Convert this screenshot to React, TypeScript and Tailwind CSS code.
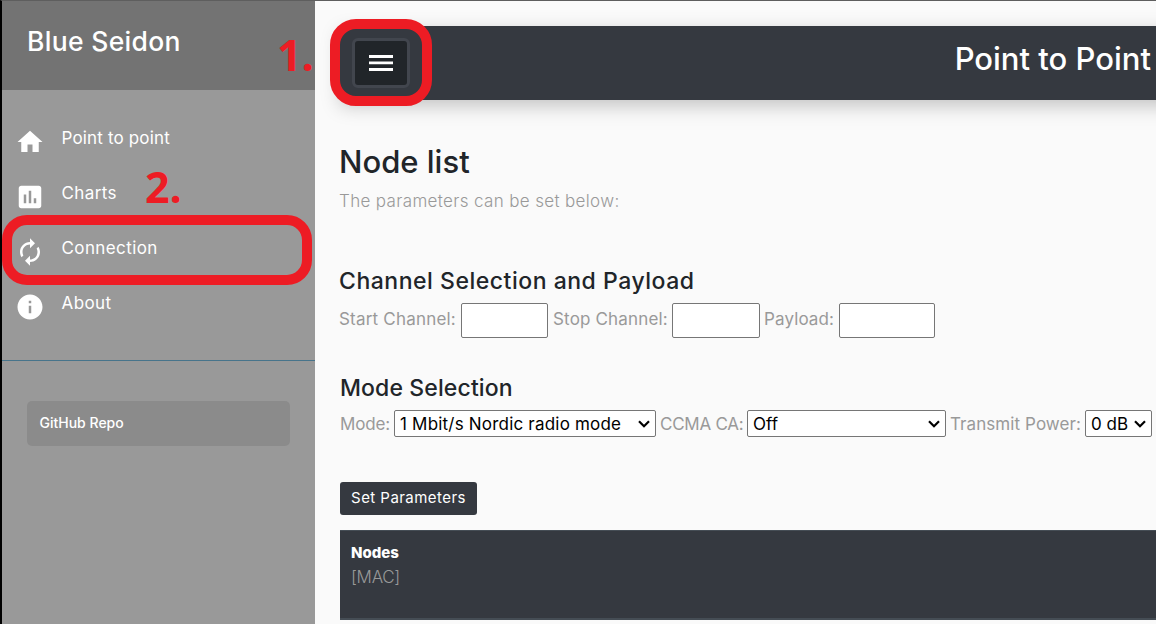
import type { ReactNode } from "react";
import { MdAssessment, MdAutorenew, MdHome, MdInfo } from "react-icons/md";

function NavItem({ icon, children }: { icon: ReactNode; children: ReactNode }) {
  return (
    <a className="flex h-[55px] items-start gap-[17px] pl-[12.5px] text-[17px] leading-[24px] text-white">
      <span className="mt-[1px] text-[30px]">{icon}</span>
      {children}
    </a>
  );
}

function Select({ className, children }: { className: string; children: ReactNode }) {
  return (
    <button
      className={
        "flex h-[27px] shrink-0 items-center justify-between rounded-[2px] border border-[#767676] bg-white pr-[5px] pl-[5px] text-[17px] leading-[26px] whitespace-nowrap text-black " +
        className
      }
    >
      <span className="pt-px">{children}</span>
      <svg width="12" height="8" viewBox="0 0 12 8" fill="none" stroke="#000" strokeWidth="2.2">
        <path d="M1 1.2L6 6.2L11 1.2" />
      </svg>
    </button>
  );
}

export default function App() {
  return (
    <div className="relative flex h-[624px] w-[1156px] overflow-hidden border-t border-l-2 border-t-[#5e5e5e] border-l-black bg-[#fafafa] font-['Inter',sans-serif]">
      <aside className="flex w-[313px] shrink-0 flex-col bg-[#999999]">
        <div className="h-[89px] bg-[#737373] pt-[20px] pl-[25px] text-[26.5px] leading-[40px] font-medium tracking-[0.32px] text-white">
          Blue Seidon
        </div>
        <nav className="h-[271px] border-b border-[#47748b] pt-[36px]">
          <NavItem icon={<MdHome />}>
            <span className="tracking-[0.16px]">Point to point</span>
          </NavItem>
          <NavItem icon={<MdAssessment />}>
            <span className="tracking-[0.4px]">Charts</span>
          </NavItem>
          <NavItem icon={<MdAutorenew />}>
            <span className="tracking-[0.4px]">Connection</span>
          </NavItem>
          <NavItem icon={<MdInfo />}>
            <span className="tracking-[0.4px]">About</span>
          </NavItem>
        </nav>
        <a className="mt-[40px] ml-[25px] flex h-[45px] w-[263px] items-center rounded-[5px] bg-[#8b8b8b] pb-[3px] pl-[12.5px] text-[14px] font-medium text-white">
          GitHub Repo
        </a>
      </aside>

      <main className="min-w-0 flex-1 pt-[25px] pl-[25px]">
        <header className="-mr-[30px] flex h-[74px] items-start justify-between bg-[#353940] pt-[12px] pr-[35px] pl-[12px] shadow-[0_6px_18px_rgba(0,0,0,0.22)]">
          <button className="flex h-[50px] w-[58px] items-center justify-center rounded-[6px] border-[3px] border-[#42464e] bg-[#212529]">
            <svg width="24" height="16" viewBox="0 0 24 16" fill="#fff">
              <path d="M0 0h24v3H0zM0 6.5h24v2.7H0zM0 13h24v3H0z" />
            </svg>
          </button>
          <h1 className="text-[31px] leading-[42px] font-medium text-white">Point to Point</h1>
        </header>

        <h2 className="mt-[41px] -ml-px text-[31px] leading-[42px] font-medium text-[#212529]">Node list</h2>
        <p className="mt-[6px] -ml-px text-[17px] leading-[24px] font-light tracking-[0.35px] text-[#999999]">
          The parameters can be set below:
        </p>

        <h4 className="mt-[54px] -ml-px text-[23px] leading-[28px] font-medium tracking-[0.52px] text-[#212529]">
          Channel Selection and Payload
        </h4>
        <div className="mt-[8px] flex h-[35px] items-center text-[17px] whitespace-nowrap text-[#999999]">
          <span className="-ml-px w-[122px] shrink-0 pb-px tracking-[0.2px]">Start Channel:</span>
          <input className="h-[35px] w-[87px] rounded-[2px] border border-[#767676] bg-white" />
          <span className="ml-[5px] w-[119px] shrink-0 pb-px tracking-[0.17px]">Stop Channel:</span>
          <input className="h-[35px] w-[88px] rounded-[2px] border border-[#767676] bg-white" />
          <span className="ml-[4px] w-[75px] shrink-0 pb-px tracking-[0.12px]">Payload:</span>
          <input className="h-[35px] w-[96px] rounded-[2px] border border-[#767676] bg-white" />
        </div>

        <h4 className="mt-[36px] text-[23px] leading-[28px] font-medium tracking-[0.12px] text-[#212529]">
          Mode Selection
        </h4>
        <div className="mt-[8px] flex h-[27px] items-center text-[17px] leading-[26px] whitespace-nowrap text-[#999999]">
          <span className="w-[54px] shrink-0 pt-px tracking-[-0.15px]">Mode:</span>
          <Select className="w-[262px] tracking-[0.2px]">1 Mbit/s Nordic radio mode</Select>
          <span className="ml-[4px] w-[87px] shrink-0 pt-px tracking-[-0.25px]">CCMA CA:</span>
          <Select className="w-[199px]">Off</Select>
          <span className="ml-[4px] w-[135px] shrink-0 pt-px tracking-[0.08px]">Transmit Power:</span>
          <Select className="w-[67px]">0 dB</Select>
        </div>

        <button className="mt-[45px] flex h-[33px] w-[137px] items-center justify-center rounded-[3px] bg-[#353940] pb-[1px] text-[15px] tracking-[0.45px] text-white">
          Set Parameters
        </button>
        <section className="mt-[15px] h-[90px] border-t border-b-2 border-[#454d55] bg-[#353940] pt-[11px] pl-[11px]">
          <div className="text-[15px] leading-[22px] font-extrabold text-white">Nodes</div>
          <div className="mt-[1px] text-[17px] leading-[25px] font-light tracking-[-0.3px] text-[#999999]">[MAC]</div>
        </section>
      </main>

      <div className="absolute top-[18px] left-[328px] h-[87px] w-[102px] rounded-[26px] border-[10px] border-[#ed1c24]" />
      <div className="absolute top-[214px] left-0 h-[70px] w-[310px] rounded-[25px] border-[10px] border-[#ed1c24]" />
      <div className="absolute top-[24px] left-[275px] font-['Open_Sans',sans-serif] text-[43px] leading-[60px] font-bold text-[#ed1c24]">
        1.
      </div>
      <div className="absolute top-[156px] left-[143px] font-['Open_Sans',sans-serif] text-[43px] leading-[60px] font-bold text-[#ed1c24]">
        2.
      </div>
    </div>
  );
}
